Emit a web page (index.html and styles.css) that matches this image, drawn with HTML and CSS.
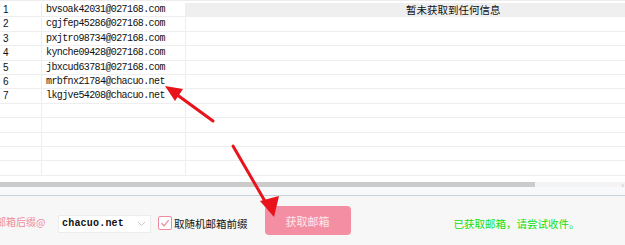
FILE: index.html
```html
<!DOCTYPE html>
<html lang="zh-CN">
<head>
    <meta charset="UTF-8">
    <title>临时邮箱</title>
    <link rel="stylesheet" href="styles.css">
</head>
<body>
    <div class="window">
        <div class="grid">
            <div class="row"><div class="num">1</div><div class="mail">bvsoak42031@027168.com</div><div class="info head">暂未获取到任何信息</div></div>
            <div class="row"><div class="num">2</div><div class="mail">cgjfep45286@027168.com</div><div class="info"></div></div>
            <div class="row"><div class="num">3</div><div class="mail">pxjtro98734@027168.com</div><div class="info"></div></div>
            <div class="row"><div class="num">4</div><div class="mail">kynche09428@027168.com</div><div class="info"></div></div>
            <div class="row"><div class="num">5</div><div class="mail">jbxcud63781@027168.com</div><div class="info"></div></div>
            <div class="row"><div class="num">6</div><div class="mail">mrbfnx21784@chacuo.net</div><div class="info"></div></div>
            <div class="row"><div class="num">7</div><div class="mail">lkgjve54208@chacuo.net</div><div class="info"></div></div>
            <div class="row"><div class="num"></div><div class="mail"></div><div class="info"></div></div>
            <div class="row"><div class="num"></div><div class="mail"></div><div class="info"></div></div>
            <div class="row"><div class="num"></div><div class="mail"></div><div class="info"></div></div>
            <div class="row"><div class="num"></div><div class="mail"></div><div class="info"></div></div>
            <div class="row"><div class="num"></div><div class="mail"></div><div class="info"></div></div>
        </div>
        <div class="hscroll">
            <div class="thumb"></div>
            <span class="arrow">›</span>
        </div>
        <div class="spacer"></div>

        <!-- bottom toolbar -->
        <div class="toolbar">
            <span class="suffix-label">邮箱后缀@</span>
            <div class="select">
                <span>chacuo.net</span>
                <svg class="chevron" width="9" height="6" viewBox="0 0 9 6"><path d="M1 1l3.5 3.5L8 1" fill="none" stroke="#c8c8c8" stroke-width="1"/></svg>
            </div>
            <label class="check">
                <span class="box">
                    <svg width="12" height="12" viewBox="0 0 12 12"><path d="M2.5 6.2l2.6 2.6 4.6-5.6" fill="none" stroke="#f08aa0" stroke-width="1.3"/></svg>
                </span>
                取随机邮箱前缀
            </label>
            <button class="fetch">获取邮箱</button>
            <span class="status">已获取邮箱，请尝试收件。</span>
        </div>

        <svg class="arrows" width="625" height="245" viewBox="0 0 625 245">
            <line x1="213" y1="121" x2="176" y2="94" stroke="#e8131b" stroke-width="3" stroke-linecap="round"/>
            <polygon points="165,86 183,89 175,101" fill="#e8131b"/>
            <line x1="233" y1="146" x2="266" y2="203" stroke="#e8131b" stroke-width="3" stroke-linecap="round"/>
            <polygon points="274,217 260,201 279,196" fill="#e8131b"/>
        </svg>
    </div>
</body>
</html>
```

FILE: styles.css
```css
body {
    margin: 0;
    font-family: 'Noto Sans CJK SC', sans-serif;
    background: #ffffff;
}

.window {
    position: relative;
    width: 625px;
    height: 245px;
    overflow: hidden;
}

.grid {
    height: 182px;
    padding-top: 2px;
    box-sizing: border-box;
    border-top: 1px solid #ededed;
    overflow: hidden;
}

.row {
    display: grid;
    grid-template-columns: 42px 144px 1fr;
    height: 14.4px;
}

.row > div {
    border-bottom: 1px solid #eeeeee;
    box-sizing: border-box;
    white-space: nowrap;
    overflow: hidden;
}

.num {
    border-right: 1px solid #eeeeee;
    padding-left: 3px;
    font-family: 'Liberation Sans', sans-serif;
    font-size: 10px;
    line-height: 14px;
    color: #111;
}

.mail {
    border-right: 1px solid #eeeeee;
    padding-left: 4px;
    font-family: 'Liberation Mono', monospace;
    font-size: 10px;
    letter-spacing: -0.6px;
    line-height: 14px;
    color: #111;
}

.info.head {
    background: #efefef;
    padding-left: 220px;
    font-size: 10.5px;
    line-height: 13.4px;
    color: #111;
}

.hscroll {
    display: flex;
    align-items: center;
    height: 5px;
    background: #f4f4f4;
}

.thumb {
    width: 535px;
    height: 5px;
    background: #cbcbcb;
}

.arrow {
    margin-left: auto;
    font-size: 8px;
    line-height: 5px;
    color: #aaa;
    padding-right: 1px;
}

.spacer {
    height: 8px;
    background: #f8f9fb;
    border-bottom: 1px solid #c6d0da;
}

.toolbar {
    display: flex;
    align-items: center;
    height: 49px;
    background: #f7f7f7;
    padding-top: 1px;
    box-sizing: border-box;
}

.suffix-label {
    margin-left: -4px;
    width: 62px;
    font-size: 10px;
    color: #f08aa0;
    white-space: nowrap;
}

.select {
    display: flex;
    align-items: center;
    width: 93px;
    height: 18px;
    box-sizing: border-box;
    border: 1px solid #ececec;
    background: #ffffff;
    margin-top: 5px;
    padding-left: 3px;
}

.select span {
    flex: 1;
    font-family: 'Liberation Mono', monospace;
    font-weight: bold;
    font-size: 10px;
    letter-spacing: 0.2px;
    color: #111;
}

.chevron {
    margin-right: 4px;
}

.check {
    display: flex;
    align-items: center;
    gap: 2px;
    margin-left: 7px;
    margin-top: 4px;
    font-size: 10.5px;
    color: #111;
}

.box {
    display: flex;
    align-items: center;
    justify-content: center;
    width: 14px;
    height: 14px;
    box-sizing: border-box;
    border: 1px solid #f08aa0;
    border-radius: 2px;
    background: #fff;
}

.fetch {
    margin-left: 17px;
    width: 86px;
    height: 29px;
    border: none;
    border-radius: 4px;
    background: #f48fa3;
    color: #fde8ec;
    font-family: 'Noto Sans CJK SC', sans-serif;
    font-size: 11px;
    margin-bottom: 1px;
}

.status {
    margin-left: 103px;
    margin-top: 4px;
    font-size: 10.5px;
    color: #0fe00f;
    white-space: nowrap;
}

.arrows {
    position: absolute;
    left: 0;
    top: 0;
    pointer-events: none;
}
```
